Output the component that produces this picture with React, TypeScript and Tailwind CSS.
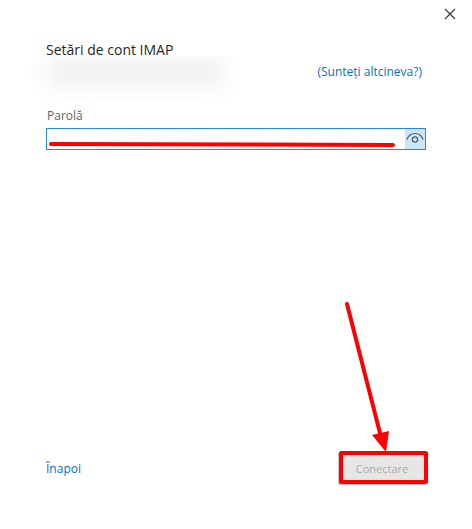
import React, { useState } from 'react';

const CloseButton: React.FC = () => (
  <button type="button" aria-label="Închidere" className="flex h-7 w-11 items-center justify-center text-[#333333]">
    <svg width="12" height="12" viewBox="0 0 12 12" fill="none" stroke="currentColor" strokeWidth="1.1">
      <path d="M1 1l10 10M11 1L1 11" />
    </svg>
  </button>
);

const EyeIcon: React.FC = () => (
  <svg width="18" height="14" viewBox="0 0 18 14" fill="none" stroke="#555b60">
    <path d="M1 7.5C2.3 3.7 5.2 1.5 9 1.5s6.7 2.2 8 6" strokeWidth="1.2" />
    <circle cx="9" cy="7.5" r="2.6" strokeWidth="1.3" />
  </svg>
);

const App: React.FC = () => {
  const [password, setPassword] = useState('');
  const [visible, setVisible] = useState(false);

  return (
    <div className="flex min-h-screen flex-col bg-white font-['Open_Sans','Noto_Sans',sans-serif] text-[#262626]">
      <header className="flex justify-end">
        <CloseButton />
      </header>

      <form className="flex flex-1 flex-col px-[46px] pb-11" onSubmit={(e) => e.preventDefault()}>
        <h1 className="mt-3 h-4 text-sm">Setări de cont IMAP</h1>

        {/* Account row, address obscured */}
        <div className="flex h-[42px] items-start justify-between">
          <div className="-ml-4 h-full w-[210px] overflow-hidden">
            <div className="mt-1 h-6 w-full rounded-full bg-[#ededed] bg-clip-content px-4 blur-[12px]" />
          </div>
          <a href="#alt" className="mt-1 pr-1 text-xs leading-6 text-[#0072c6]">
            (Sunteți altcineva?)
          </a>
        </div>

        {/* Password */}
        <label htmlFor="password" className="mt-2 pl-px text-xs leading-5 text-[#666666]">
          Parolă
        </label>
        <div className="relative mt-0.5 flex h-[22px] border border-[#2b88d8]">
          <input
            id="password"
            type={visible ? 'text' : 'password'}
            value={password}
            onChange={(e) => setPassword(e.target.value)}
            className="min-w-0 flex-1 px-1 text-xs outline-none"
          />
          <button
            type="button"
            aria-label="Afișare parolă"
            onClick={() => setVisible(!visible)}
            className="flex w-5 items-center justify-center bg-[#cde6f7]"
          >
            <EyeIcon />
          </button>
          <svg
            className="pointer-events-none absolute top-3 left-[2px] h-2 w-[346px]"
            viewBox="0 0 346 8"
            fill="none"
          >
            <path d="M2 3l342 1" stroke="#ff0000" strokeWidth="4" strokeLinecap="round" />
          </svg>
        </div>

        {/* Footer */}
        <footer className="mt-auto flex items-center justify-between">
          <button type="button" className="text-xs leading-5 text-[#0072c6]">
            Înapoi
          </button>
          <div className="relative">
            <button
              type="submit"
              disabled
              className="h-8 w-[88px] border border-[#c8c8c8] bg-[#e6e6e6] text-[11px] text-[#ababab]"
            >
              Conectare
            </button>
            <div className="pointer-events-none absolute -top-0.5 -right-0.5 bottom-px left-px rounded-xs border-4 border-[#ff0000]" />
            <svg
              className="pointer-events-none absolute right-[34px] bottom-8 h-[152px] w-12"
              viewBox="0 0 48 152"
              fill="none"
            >
              <path d="M3 3l34 133" stroke="#ff0000" strokeWidth="4" strokeLinecap="round" />
              <path d="M28 134l17-4-3 21z" fill="#ff0000" />
            </svg>
          </div>
        </footer>
      </form>
    </div>
  );
};

export default App;
